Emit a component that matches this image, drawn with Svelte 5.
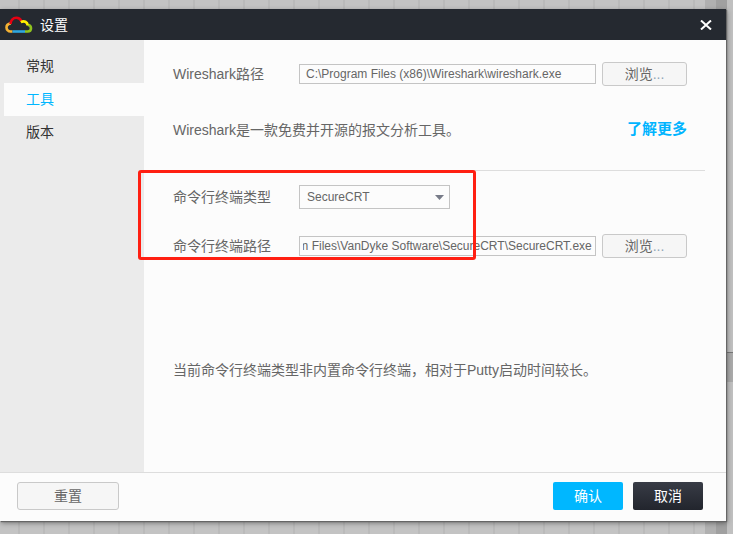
<script lang="ts">
  type Tab = { id: string; label: string };

  const tabs: Tab[] = [
    { id: 'general', label: '常规' },
    { id: 'tools', label: '工具' },
    { id: 'version', label: '版本' }
  ];

  let active = $state('tools');
  let wiresharkPath = $state('C:\\Program Files (x86)\\Wireshark\\wireshark.exe');
  let terminalType = $state('SecureCRT');
  let terminalPath = $state('C:\\Program Files\\VanDyke Software\\SecureCRT\\SecureCRT.exe');

  // Long paths are shown from their end, so the executable stays readable.
  function scrollToEnd(node: HTMLInputElement) {
    requestAnimationFrame(() => {
      node.scrollLeft = node.scrollWidth;
    });
  }
</script>

<div class="desktop">
  <section class="dialog" aria-labelledby="dialog-title">
    <header>
      <svg class="logo" viewBox="0 0 28 18" aria-hidden="true">
        <path class="green" d="M22.6 8.8C25.2 9.2 26 10.4 26 12.2C26 14.3 24.6 15.5 22.5 15.5H20" />
        <path class="orange" d="M7.5 15.5H5.6A4 4 0 0 1 1.5 11.5C1.5 9.4 3.2 7.8 5.8 7.4" />
        <path class="red" d="M5.6 8C5.4 4.4 8 1.8 11.4 1.8C13.7 1.8 15.4 3 16.4 5.2" />
        <path class="yellow" d="M15.8 6.2C19.2 4.4 22.4 5.8 22.6 9.4" />
        <path class="blue" d="M7.5 15.5H20" />
      </svg>
      <h1 id="dialog-title">设置</h1>
      <button type="button" class="close" aria-label="关闭">
        <svg viewBox="0 0 12 10" aria-hidden="true"><path d="M1 0.5L11 9.5M11 0.5L1 9.5" /></svg>
      </button>
    </header>

    <div class="body">
      <nav>
        {#each tabs as tab (tab.id)}
          <button
            type="button"
            class:selected={tab.id === active}
            aria-current={tab.id === active ? 'page' : undefined}
            onclick={() => (active = tab.id)}>{tab.label}</button
          >
        {/each}
      </nav>

      <main>
        <div class="row">
          <label for="wireshark-path">Wireshark路径</label>
          <input id="wireshark-path" type="text" bind:value={wiresharkPath} />
          <button type="button" class="browse">浏览<span>...</span></button>
        </div>
        <div class="row about">
          <p>Wireshark是一款免费并开源的报文分析工具。</p>
          <a href="#more">了解更多</a>
        </div>

        <hr />

        <div class="terminal">
          <div class="row">
            <label for="terminal-type">命令行终端类型</label>
            <div class="select">
              <select id="terminal-type" bind:value={terminalType}>
                <option>SecureCRT</option>
                <option>Putty</option>
              </select>
              <svg viewBox="0 0 9 5" aria-hidden="true"><path d="M0 0H9L4.5 5Z" /></svg>
            </div>
          </div>
          <div class="row">
            <label for="terminal-path">命令行终端路径</label>
            <input id="terminal-path" type="text" bind:value={terminalPath} use:scrollToEnd />
            <button type="button" class="browse">浏览<span>...</span></button>
          </div>
          <div class="highlight" aria-hidden="true"></div>
        </div>

        <p class="note">当前命令行终端类型非内置命令行终端，相对于Putty启动时间较长。</p>
      </main>
    </div>

    <footer>
      <button type="button" class="reset">重置</button>
      <button type="button" class="confirm">确认</button>
      <button type="button" class="cancel">取消</button>
    </footer>
  </section>
</div>

<style>
  :global(body) {
    margin: 0;
  }

  /* Grid canvas behind the dialog, with the edge of its scrollbar at the right. */
  .desktop {
    box-sizing: border-box;
    display: flex;
    min-height: 100vh;
    padding: 9px 7px 13px 0;
    background:
      linear-gradient(#777, #777) right 0 top 352px / 6px 1px no-repeat,
      linear-gradient(#aaa, #aaa) right 0 top 353px / 6px 29px no-repeat,
      linear-gradient(270deg, #c0c0c0 6px, #a0a0a0 6px 17px, #b0b0b0 17px 28px, transparent 28px),
      repeating-linear-gradient(90deg, transparent 0 18px, #bababa 18px 20px, transparent 20px 25px),
      #c3c3c3;
    font-family: 'Liberation Sans', 'Noto Sans CJK SC', sans-serif;
    font-size: 14px;
    line-height: 24px;
    color: #666;
  }

  .dialog {
    flex: 1;
    display: flex;
    flex-direction: column;
    background: #fcfcfc;
    box-shadow:
      1px 1px 1px #666,
      1px 2px 5px rgba(0, 0, 0, 0.4);
  }

  header {
    display: flex;
    align-items: center;
    height: 31px;
    padding: 0 14px 0 5px;
    background: #252930;
  }

  .logo {
    width: 28px;
    height: 18px;
    fill: none;
    stroke-width: 2.6;
  }

  .orange {
    stroke: #f5b234;
  }

  .red {
    stroke: #e50012;
  }

  .yellow {
    stroke: #fff000;
  }

  .green {
    stroke: #8fc31f;
  }

  .blue {
    stroke: #2ea7e0;
  }

  h1 {
    flex: 1;
    margin: 0 0 0 7px;
    font-size: 14px;
    font-weight: 400;
    color: #fff;
  }

  button {
    padding: 0;
    border: 0;
    font: inherit;
    color: inherit;
    cursor: pointer;
  }

  .close {
    display: flex;
    background: none;
  }

  .close svg {
    width: 12px;
    height: 10px;
    fill: none;
    stroke: #fff;
    stroke-width: 2;
  }

  .body {
    flex: 1;
    display: flex;
  }

  nav {
    box-sizing: border-box;
    display: flex;
    flex-direction: column;
    width: 144px;
    padding: 10px 0 0 4px;
    background: #ebebeb;
  }

  nav button {
    box-sizing: border-box;
    height: 33px;
    padding: 0 0 2px 22px;
    background: none;
    text-align: left;
    color: #333;
  }

  nav .selected {
    background: #fcfcfc;
    color: #00b7ff;
  }

  main {
    flex: 1;
    padding: 22px 21px 0 29px;
  }

  .row {
    display: flex;
    align-items: center;
    margin-right: 18px;
  }

  label {
    width: 126px;
  }

  input,
  select {
    box-sizing: border-box;
    border: 1px solid #c4c4c4;
    border-radius: 0;
    background: #fcfcfc;
    font-family: inherit;
    font-size: 12px;
    color: #666;
  }

  input {
    flex: 1;
    min-width: 0;
    height: 20px;
    padding: 0 3px;
    text-indent: 3px;
  }

  .browse,
  .reset {
    box-sizing: border-box;
    border: 1px solid #c9c9c9;
    border-radius: 3px;
    background: #f6f6f6;
  }

  .browse {
    width: 85px;
    height: 24px;
    margin-left: 6px;
    line-height: 20px;
  }

  .browse span {
    color: #8fa6b8;
  }

  p {
    margin: 0;
  }

  .about {
    justify-content: space-between;
    margin-top: 32px;
  }

  a {
    padding-bottom: 2px;
    font-size: 15px;
    line-height: 22px;
    font-weight: 700;
    color: #00b4ff;
    text-decoration: none;
  }

  hr {
    margin: 28px 0 0;
    border: 0;
    border-top: 1px solid #ddd;
  }

  .terminal {
    position: relative;
    display: flex;
    flex-direction: column;
    gap: 25px;
    padding-top: 14px;
  }

  .select {
    position: relative;
    width: 151px;
  }

  select {
    display: block;
    width: 100%;
    height: 24px;
    padding: 0 7px;
    appearance: none;
  }

  .select svg {
    position: absolute;
    top: 10px;
    right: 6px;
    width: 9px;
    height: 5px;
    fill: #777b88;
    pointer-events: none;
  }

  /* Marker frame around the terminal fields, reaching over the sidebar edge. */
  .highlight {
    position: absolute;
    inset: -1px 229px -2px -35px;
    border: 3px solid #ff1f12;
    border-radius: 3px;
    pointer-events: none;
  }

  .note {
    margin-top: 100px;
  }

  footer {
    display: flex;
    gap: 10px;
    padding: 9px 23px 11px 17px;
    border-top: 1px solid #ddd;
  }

  footer button {
    height: 28px;
    border-radius: 2px;
  }

  .reset {
    width: 102px;
    margin-right: auto;
  }

  .confirm {
    width: 70px;
    background: #00b7ff;
    color: #fff;
  }

  .cancel {
    width: 70px;
    background: linear-gradient(#383c46, #22252d);
    color: #fff;
  }
</style>
